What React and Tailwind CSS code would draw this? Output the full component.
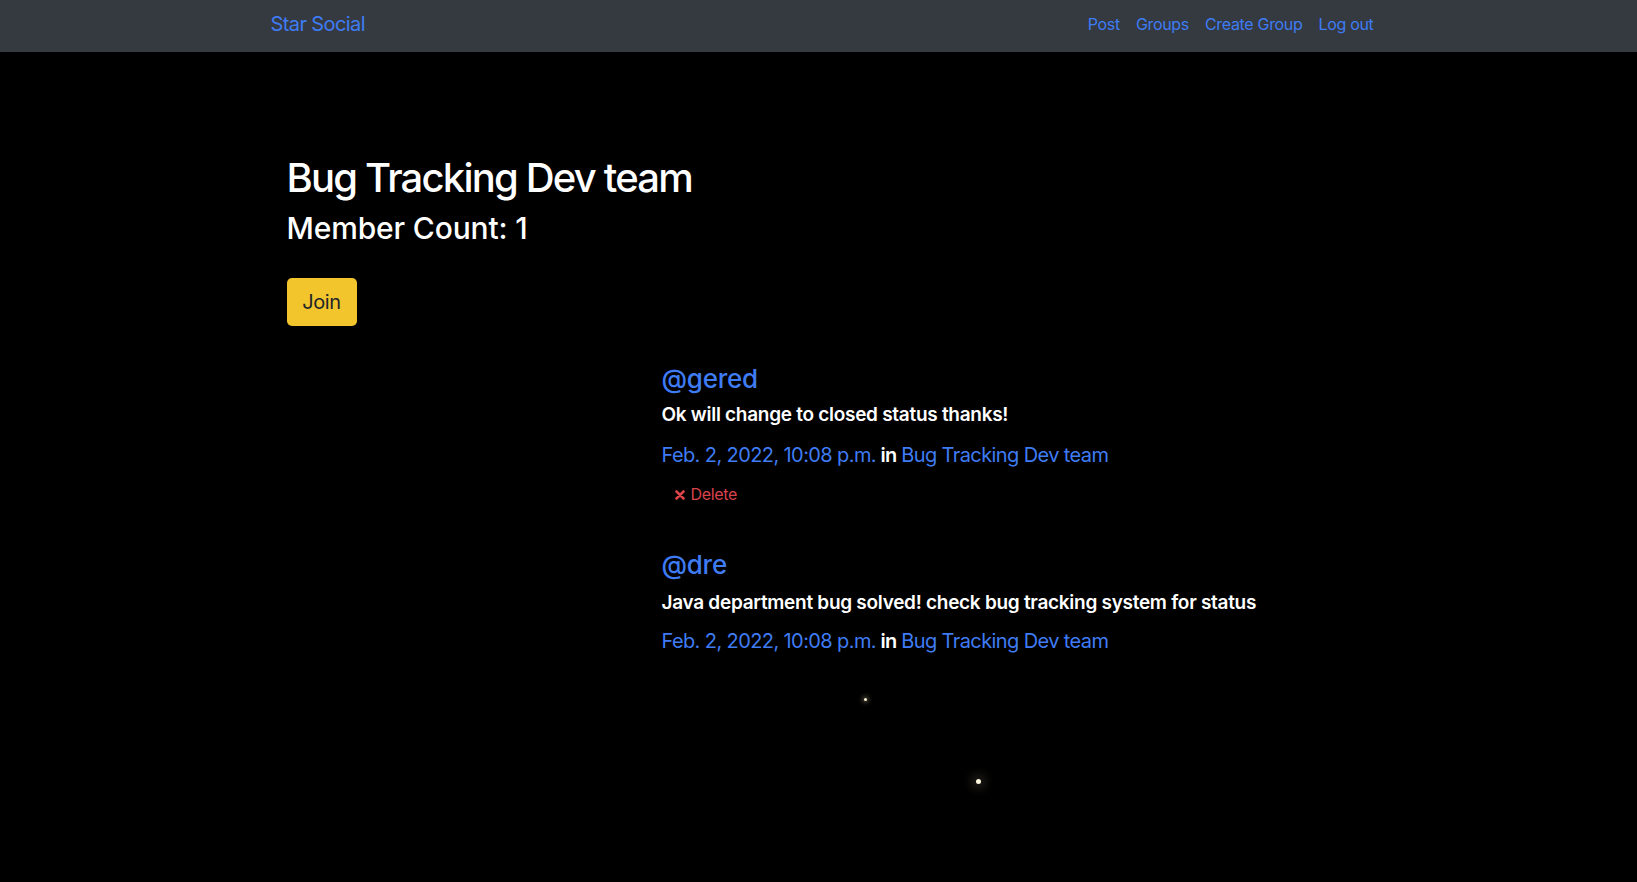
import React from "react";

const font = { fontFamily: "Inter, 'Noto Sans', sans-serif" };

function Post({ user, body, canDelete, second }) {
  return (
    <div className="flex flex-col">
      <a className="block text-[26px] leading-[32px] font-medium text-[#3f7cf4] tracking-[-0.01em]">@{user}</a>
      <div
        className={
          (second ? "mt-[8px] " : "mt-[6px] ") +
          "text-[19px] leading-[28px] font-semibold text-white tracking-[-0.015em]"
        }
      >
        {body}
      </div>
      <div className={(second ? "mt-[9px] " : "mt-[11px] ") + "text-[20px] leading-[30px] tracking-[-0.03em]"}>
        <a className="text-[#3f7cf4]">Feb. 2, 2022, 10:08 p.m.</a>
        <span className="text-white font-semibold"> in </span>
        <a className="text-[#3f7cf4]">Bug Tracking Dev team</a>
      </div>
      {canDelete && (
        <div className="mt-[12px] pl-[13px] flex items-center gap-[6px] text-[16px] leading-[24px] text-[#d9434a] tracking-[-0.02em]">
          <svg width="10" height="10" viewBox="0 0 10 10" className="mt-[1px]">
            <path d="M1.5 1.5 L8.5 8.5 M8.5 1.5 L1.5 8.5" stroke="#d9434a" strokeWidth="2.6" strokeLinecap="round" />
          </svg>
          <span>Delete</span>
        </div>
      )}
    </div>
  );
}

export default function App() {
  return (
    <div className="min-h-screen bg-black relative overflow-hidden" style={font}>
      <nav className="h-[52px] bg-[#343a40]">
        <div className="w-[1140px] mx-auto pl-[22px] pr-[15px] pt-[9px] flex items-start justify-between">
          <a className="text-[20px] leading-[30px] text-[#3f7cf4] tracking-[-0.03em]">Star Social</a>
          <ul className="mt-[3px] flex items-start text-[16px] leading-[24px] text-[#3f7cf4] tracking-[-0.02em]">
            <li className="px-[8px]">Post</li>
            <li className="px-[8px]">Groups</li>
            <li className="px-[8px]">Create Group</li>
            <li className="pl-[8px]">Log out</li>
          </ul>
        </div>
      </nav>

      <main className="w-[1140px] mx-auto">
        <div className="pl-[38px] pt-[102px]">
          <h1 className="text-[40px] leading-[48px] font-medium text-white tracking-[-0.045em]">Bug Tracking Dev team</h1>
          <h3 className="mt-[8px] text-[30px] leading-[36px] font-medium text-white tracking-[-0.005em]">Member Count: 1</h3>
          <button className="mt-[32px] h-[48px] w-[70px] rounded-[5px] bg-[#f2c52d] text-[20px] leading-[30px] text-[#212529] tracking-[-0.02em]">
            Join
          </button>
        </div>

        <div className="pl-[413px] pt-[37px] flex flex-col">
          <Post user="gered" body="Ok will change to closed status thanks!" canDelete />
          <div className="mt-[43px]">
            <Post user="dre" body="Java department bug solved! check bug tracking system for status" second />
          </div>
        </div>
      </main>

      <span className="absolute left-[864px] top-[698px] w-[3px] h-[3px] rounded-full bg-[#fff6d8] shadow-[0_0_4px_2px_rgba(255,240,200,0.25)]" />
      <span className="absolute left-[976px] top-[779px] w-[5px] h-[5px] rounded-full bg-[#fff8e0] shadow-[0_0_10px_5px_rgba(255,240,200,0.12)]" />
    </div>
  );
}
